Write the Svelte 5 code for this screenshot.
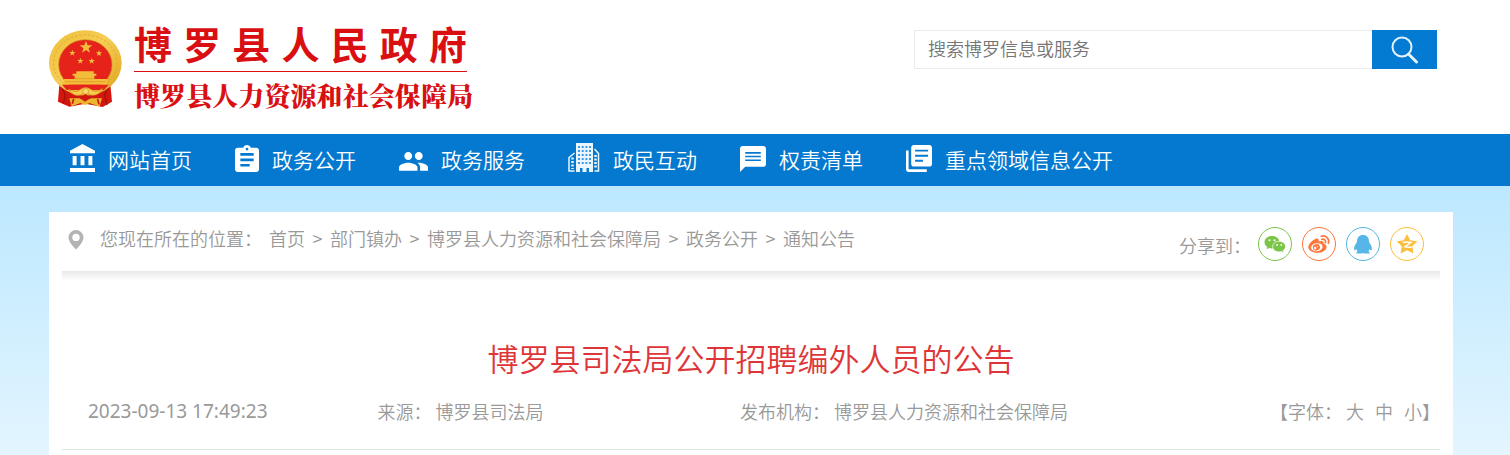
<script>
  const nav = [
    { label: '网站首页', w: 25, h: 28, box: '2 1 19 21', d: 'M4 10v7h3v-7H4zm6 0v7h3v-7h-3zM2 22h19v-3H2v3zm14-12v7h3v-7h-3zm-4.5-9L2 6v2h19V6l-9.500-5z' },
    { label: '政务公开', w: 24, h: 27, box: '3 1 18 20', d: 'M19 3h-4.180C14.400 1.840 13.300 1 12 1c-1.300 0-2.400.840-2.820 2H5c-1.100 0-2 .900-2 2v14c0 1.100.900 2 2 2h14c1.100 0 2-.900 2-2V5c0-1.100-.900-2-2-2zm-7 0c.550 0 1 .450 1 1s-.450 1-1 1-1-.450-1-1 .450-1 1-1zm2 14H7v-2h7v2zm3-4H7v-2h10v2zm0-4H7V7h10v2z' },
    { label: '政务服务', w: 29, h: 20, box: '1 5 22 15', d: 'M16 11c1.660 0 2.990-1.340 2.990-3S17.660 5 16 5c-1.660 0-3 1.340-3 3s1.340 3 3 3zm-8 0c1.660 0 2.990-1.340 2.990-3S9.660 5 8 5C6.340 5 5 6.340 5 8s1.340 3 3 3zm0 2c-2.330 0-7 1.170-7 3.500V19h14v-2.500c0-2.330-4.670-3.500-7-3.500zm8 0c-.290 0-.620.020-.970.050 1.160.840 1.970 1.970 1.970 3.450V19h6v-2.500c0-2.330-4.670-3.500-7-3.500z' },
    { label: '政民互动', w: 32, h: 29, box: '0 0 32 29', building: true },
    { label: '权责清单', w: 26, h: 26, box: '2 2 20 20', d: 'M20 2H4c-1.100 0-1.990.900-1.990 2L2 22l4-4h14c1.100 0 2-.900 2-2V4c0-1.100-.900-2-2-2zM6 6.700h12v1.200H6zM6 9.500h12v1.200H6zM6 12.300h12v1.200H6z' },
    { label: '重点领域信息公开', w: 26, h: 27, box: '2 2 20 20', d: 'M4 6H2v14c0 1.100.900 2 2 2h14v-2H4V6zm16-4H8c-1.100 0-2 .900-2 2v12c0 1.100.900 2 2 2h12c1.100 0 2-.900 2-2V4c0-1.100-.900-2-2-2zM9 9.300h10v1.400H9zm0 3.700h6v1.400H9zm0-7.500h10v1.400H9z' }
  ];
  const trail = ['首页', '部门镇办', '博罗县人力资源和社会保障局', '政务公开', '通知公告'];
</script>

{#snippet star(x, y, r)}
  <polygon transform="translate({x} {y}) scale({r})" points="0,-1 .24,-.32 .95,-.31 .38,.12 .59,.81 0,.4 -.59,.81 -.38,.12 -.95,-.31 -.24,-.32" />
{/snippet}

<div class="page">
  <header>
    <a class="brand" href="#home">
      <svg class="emblem" viewBox="27 45 219 234" aria-hidden="true">
        <defs>
          <linearGradient id="gold" x1="0" y1="0" x2="1" y2="1">
            <stop offset="0" stop-color="#edbd36" /><stop offset=".45" stop-color="#f6ce55" /><stop offset="1" stop-color="#e0a31f" />
          </linearGradient>
        </defs>
        <path d="M58 208 54 260 88 275 136 266 188 276 216 260 211 208Z" fill="#d3170f" />
        <path d="M64 214 76 240 70 266M206 214 194 240 201 270" stroke="#9f1410" stroke-width="4" fill="none" />
        <ellipse cx="136" cy="144" rx="109" ry="98" fill="url(#gold)" />
        <ellipse cx="136" cy="144" rx="95" ry="84" fill="none" stroke="#e3aa2c" stroke-width="3" stroke-dasharray="7 6" />
        <ellipse cx="136" cy="149" rx="80" ry="75" fill="#e5231b" stroke="#d28b16" stroke-width="2" />
        <g fill="#f2bd3a">
          {@render star(138, 97, 20)}
          {@render star(97, 114, 10)}
          {@render star(177, 115, 10)}
          {@render star(121, 138, 10)}
          {@render star(155, 138, 10)}
          <path d="M109 169h52v7h8v6h-6v10h38v17H72v-17h32v-10h-6v-6h11z" />
        </g>
        <path d="M76 200h120M104 191h60" stroke="#dd8f20" stroke-width="2" />
        <path d="M66 209h140l-14 16H80z" fill="#e5231b" />
        <path d="M86 223 Q108 236 120 224 Q137 211 154 224 Q168 236 188 220 Q177 245 151 240 Q136 228 122 240 Q98 246 86 223Z" fill="#f7cb4d" stroke="#d28b16" stroke-width="2" />
        <circle cx="137" cy="229" r="9" fill="#f9d86b" stroke="#d28b16" stroke-width="2" />
        <path d="M88 250h32l15 10 16-10h35l-8 25-29-11-14 6-14-6-26 10z" fill="#e9b62d" />
        <path d="M101 252 97 266M173 252 177 268M120 250 136 240 152 250" fill="none" stroke="#c91a12" stroke-width="5" />
      </svg>
      <span class="names">
        <span class="gov">博罗县人民政府</span>
        <span class="bureau">博罗县人力资源和社会保障局</span>
      </span>
    </a>
    <form class="search" role="search" onsubmit={(e) => e.preventDefault()}>
      <input type="text" aria-label="搜索" placeholder="搜索博罗信息或服务" />
      <button type="submit" aria-label="搜索">
        <svg width="28" height="28" viewBox="0 0 28 28" fill="none" stroke="#e3f3ff" aria-hidden="true">
          <circle cx="11" cy="11" r="9.500" stroke-width="2" /><path d="m17.500 18 8 8" stroke-width="3" stroke-linecap="round" />
        </svg>
      </button>
    </form>
  </header>

  <nav>
    {#each nav as item}
      <a href="#nav">
        <svg width={item.w} height={item.h} viewBox={item.box} preserveAspectRatio="none" fill="#fff" fill-rule="evenodd" aria-hidden="true">
          {#if item.building}
            <path d="M8 0h17v29h-4v-4h-2.500v4h-4v-4H12v4H8z" fill="#e9f6ff" />
            <path d="M11 3v18M14.700 3v18M18.400 3v18M22 3v18" stroke="#3f9bdf" stroke-width="2" stroke-dasharray="2 2" />
            <path d="M6.500 10 1 14.500V28h5.500M26.500 6l4 4.500V28h-4" fill="none" stroke="#e9f6ff" stroke-width="1.500" />
            <path d="M4.500 14.500V26M27.500 12v14" stroke="#e9f6ff" stroke-width="2.500" stroke-dasharray="2 1.500" />
          {:else}
            <path d={item.d} />
          {/if}
        </svg>
        <span>{item.label}</span>
      </a>
    {/each}
  </nav>

  <main>
    <article>
      <div class="bar">
        <svg class="pin" width="16" height="20" viewBox="0 0 16 20" aria-hidden="true">
          <path d="M8 0a7.500 7.500 0 0 0-7.500 7.500C.5 12.500 8 19.500 8 19.500s7.500-7 7.500-12A7.500 7.500 0 0 0 8 0zm0 3.700a3.700 3.700 0 1 1 0 7.400 3.700 3.700 0 0 1 0-7.400z" fill="#b3b3b3" fill-rule="evenodd" />
        </svg>
        <div class="trail">
          <span>您现在所在的位置：</span>
          {#each trail as step, i}
            {#if i}<span class="sep">&gt;</span>{/if}<a href="#trail">{step}</a>
          {/each}
        </div>
        <div class="share">
          <span>分享到：</span>
          <button class="wechat" aria-label="微信">
            <svg width="22" height="22" viewBox="0 0 22 22" fill="currentColor">
              <path d="M8 3C3.800 3 .500 5.700.500 9.200c0 2 1.100 3.700 2.800 4.800l-.7 2.300L5.300 15c.8.300 1.800.400 2.700.400 4.200 0 7.500-2.700 7.500-6.200S12.200 3 8 3z" />
              <path d="M15 8.300c-3.600 0-6.400 2.300-6.400 5.300s2.800 5.300 6.400 5.300c.8 0 1.600-.1 2.300-.4l2.400 1.200-.6-2c1.500-1 2.400-2.400 2.400-4.100 0-3-2.900-5.300-6.500-5.300z" stroke="#fff" stroke-width=".7" />
              <g fill="#fff"><circle cx="5.500" cy="7.200" r="1" /><circle cx="10.500" cy="7.200" r="1" /><circle cx="13" cy="12" r=".9" /><circle cx="17.300" cy="12" r=".9" /></g>
            </svg>
          </button>
          <button class="weibo" aria-label="微博">
            <svg width="22" height="22" viewBox="0 0 22 22">
              <path fill="currentColor" d="M7.200 6C10 4.700 11.200 6 10.600 8.600c3-1.300 5.600-.8 4.900 1.900 6.200 2.200 2.600 9.300-6 9.300C3.800 19.800.300 17.200.300 14.300.300 11.200 4 7.400 7.200 6z" />
              <ellipse cx="8.800" cy="14.200" rx="5.800" ry="4" fill="#fff" transform="rotate(-8 8.800 14.200)" />
              <ellipse cx="8.400" cy="14.300" rx="3.600" ry="3.100" fill="currentColor" transform="rotate(-18 8.400 14.300)" />
              <circle cx="7.200" cy="15" r="1.200" fill="#fff" /><circle cx="9.500" cy="13.500" r=".6" fill="#fff" />
              <path d="M13.200 3.200c4.800-1.400 8.600 2.700 7.200 7M13.800 6.300c2.500-.6 4.300 1.300 3.600 3.400" fill="none" stroke="currentColor" stroke-width="1.700" stroke-linecap="round" />
            </svg>
          </button>
          <button class="qq" aria-label="QQ">
            <svg width="22" height="22" viewBox="0 0 22 22" fill="currentColor">
              <path d="M11 2C7.200 2 5 4.600 5 8.200c0 1.200-.7 1.700-1.300 2.800-1.200 1.900-1.900 3.700-1.500 5.800.3 1.200 1.500.300 2.200-.8.300 1 .700 1.700 1.300 2.300-1 .400-1.400 1-1.200 2.100h5.800l.7-.7.7.7h5.800c.2-1.100-.2-1.700-1.200-2.100.600-.6 1-1.300 1.300-2.300.7 1.100 1.900 2 2.200.8.400-2.100-.3-3.900-1.500-5.800C17.700 9.900 17 9.400 17 8.200 17 4.600 14.800 2 11 2z" />
            </svg>
          </button>
          <button class="qzone" aria-label="QQ空间">
            <svg width="22" height="22" viewBox="0 0 22 22">
              <path d="m11 1.800 2.900 6 6.600.9-4.800 4.600 1.200 6.500L11 16.700l-5.900 3.100 1.200-6.500L1.500 8.700l6.600-.9z" fill="currentColor" stroke="currentColor" stroke-linejoin="round" />
              <path d="M6.800 9.400c2.700-.5 5.300-.5 8 0L9 13.800c2.200.500 4.400.600 6.700.200" fill="none" stroke="#fff" stroke-width="1.500" />
            </svg>
          </button>
        </div>
      </div>
      <h1>博罗县司法局公开招聘编外人员的公告</h1>
      <div class="meta">
        <time>2023-09-13 17:49:23</time>
        <span>来源： 博罗县司法局</span>
        <span>发布机构： 博罗县人力资源和社会保障局</span>
        <span class="sizes">【字体： <a href="#large">大</a><a href="#medium">中</a><a href="#small">小</a>】</span>
      </div>
    </article>
  </main>
</div>

<style>
  :global(body) { margin: 0; }
  .page {
    display: flex;
    flex-direction: column;
    min-height: 100vh;
    font: 350 18px/28px "Noto Sans CJK SC", sans-serif;
    color: #999;
    background: #fff;
  }
  a { color: inherit; text-decoration: none; }
  svg { display: block; flex: none; }

  header {
    display: flex;
    justify-content: space-between;
    align-items: flex-start;
    height: 134px;
    padding: 0 73px 0 49px;
    box-sizing: border-box;
  }
  .brand { display: flex; gap: 12px; color: #d90f12; }
  .emblem { width: 73px; height: 78px; margin-top: 30px; }
  .names { width: 339px; padding-top: 18px; }
  .gov, .bureau { display: block; text-align-last: justify; white-space: nowrap; }
  .gov {
    width: 333px;
    height: 53px;
    border-bottom: 1px solid #d90f12;
    font-size: 38px;
    line-height: 50px;
    font-weight: 700;
  }
  .bureau {
    font: 900 26px/46px "Noto Serif CJK SC", "Noto Sans CJK SC", serif;
  }
  .search { display: flex; flex: 0 1 523px; height: 39px; margin-top: 30px; }
  .search input {
    flex: 1;
    min-width: 0;
    box-sizing: border-box;
    padding: 0 13px 3px;
    border: 1px solid #ebebeb;
    border-right: 0;
    font: inherit;
    color: #333;
    outline: 0;
  }
  .search input::placeholder { color: #757575; opacity: 1; }
  .search button {
    display: grid;
    place-items: center;
    width: 65px;
    padding: 0;
    border: 0;
    background: #037bd2;
  }

  nav {
    display: flex;
    gap: 43px;
    height: 52px;
    padding: 0 57px 0 70px;
    background: #0479cf;
    color: #fff;
    font-size: 21px;
    line-height: 50px;
    white-space: nowrap;
  }
  nav a { display: flex; gap: 13px; }
  nav svg { align-self: flex-end; margin-bottom: 14px; }

  main {
    display: flex;
    flex: 1;
    padding: 26px 57px 0 49px;
    background: linear-gradient(#bce8ff, #e3f5ff);
  }
  article { flex: 1; padding: 0 13px; background: #fff; }
  .bar { display: flex; height: 59px; padding: 0 16px 0 6px; position: relative; }
  .bar::after {
    content: "";
    position: absolute;
    inset: 100% 0 auto;
    height: 10px;
    background: linear-gradient(#e9e9e9, #fff);
  }
  .pin { margin: 18px 16px 0 0; }
  .trail { display: flex; padding-top: 12px; white-space: nowrap; }
  .trail > span:first-child { margin-right: 7px; }
  .trail .sep { width: 25px; text-align: center; }
  .share { display: flex; gap: 10px; margin-left: auto; padding-top: 15px; }
  .share span { margin-top: 4px; margin-right: -3px; }
  .share button {
    display: grid;
    place-items: center;
    width: 34px;
    height: 34px;
    padding: 0;
    border: 1px solid;
    border-radius: 50%;
    background: #fff;
  }
  .wechat { color: #7bc549; }
  .weibo { color: #ff763b; }
  .qq { color: #56b6e7; }
  .qzone { color: #fdbe3d; }

  h1 {
    margin: 64px 0 0;
    font-size: 31px;
    font-weight: 350;
    line-height: 46px;
    text-align: center;
    color: #de3638;
  }
  .meta {
    display: grid;
    grid-template-columns: 289fr 362fr 529fr auto;
    padding: 16px 0 24px 26px;
    border-bottom: 1px solid #e3e3e3;
    white-space: nowrap;
  }
  time { font-family: "Noto Sans", sans-serif; font-size: 19px; font-weight: 400; }
  .sizes a + a { margin-left: 11px; }
</style>
